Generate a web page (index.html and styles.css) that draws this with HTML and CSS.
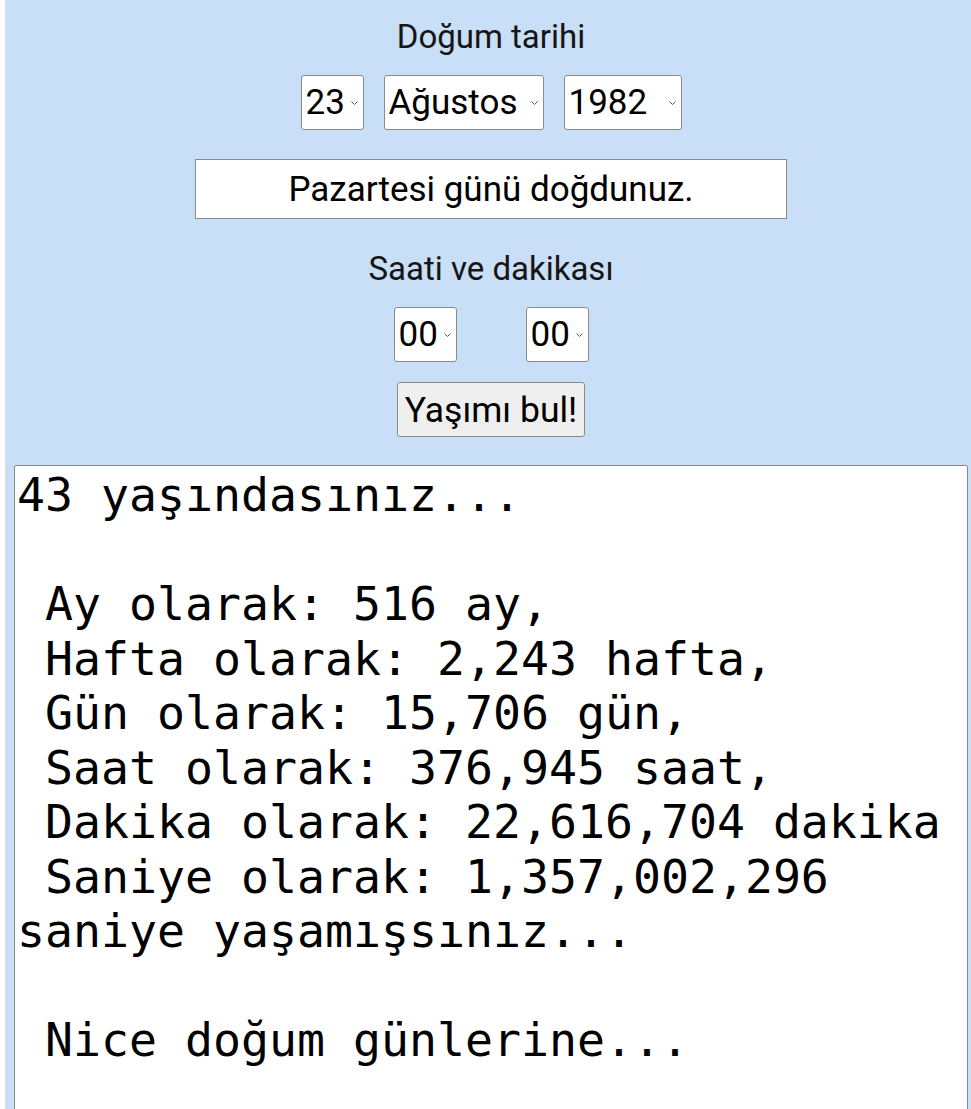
FILE: index.html
```html
<!DOCTYPE html>
<html lang="tr">
<head>
<meta charset="utf-8">
<link rel="stylesheet" href="styles.css">
</head>
<body>
<div class="page">
  <div class="label first">Doğum tarihi</div>
  <div class="row date-row">
    <span class="selwrap"><select class="sel sel-day"><option>23</option></select><svg class="chev" width="7" height="4" viewBox="0 0 7 4"><path d="M0.5 0.5 L3.5 3.5 L6.5 0.5" fill="none" stroke="#555" stroke-width="1"/></svg></span>
    <span class="selwrap"><select class="sel sel-month"><option>Ağustos</option></select><svg class="chev" width="7" height="4" viewBox="0 0 7 4"><path d="M0.5 0.5 L3.5 3.5 L6.5 0.5" fill="none" stroke="#555" stroke-width="1"/></svg></span>
    <span class="selwrap"><select class="sel sel-year"><option>1982</option></select><svg class="chev" width="7" height="4" viewBox="0 0 7 4"><path d="M0.5 0.5 L3.5 3.5 L6.5 0.5" fill="none" stroke="#555" stroke-width="1"/></svg></span>
  </div>
  <input class="result" type="text" readonly value="Pazartesi günü doğdunuz.">
  <div class="label second">Saati ve dakikası</div>
  <div class="row time-row">
    <span class="selwrap"><select class="sel sel-hour"><option>00</option></select><svg class="chev" width="7" height="4" viewBox="0 0 7 4"><path d="M0.5 0.5 L3.5 3.5 L6.5 0.5" fill="none" stroke="#555" stroke-width="1"/></svg></span>
    <span class="selwrap"><select class="sel sel-hour"><option>00</option></select><svg class="chev" width="7" height="4" viewBox="0 0 7 4"><path d="M0.5 0.5 L3.5 3.5 L6.5 0.5" fill="none" stroke="#555" stroke-width="1"/></svg></span>
  </div>
  <div class="row btn-row">
    <button class="btn" type="button">Yaşımı bul!</button>
  </div>
  <textarea class="output" readonly>43 yaşındasınız...

 Ay olarak: 516 ay,
 Hafta olarak: 2,243 hafta,
 Gün olarak: 15,706 gün,
 Saat olarak: 376,945 saat,
 Dakika olarak: 22,616,704 dakika
 Saniye olarak: 1,357,002,296 saniye yaşamışsınız...

 Nice doğum günlerine...</textarea>
</div>
</body>
</html>
```
FILE: styles.css
```css
html, body {
  margin: 0;
  padding: 0;
  background: #ffffff;
}
.page {
  margin-left: 5px;
  padding: 19px 3px 0 9px;
  background: #c9def7;
  display: flex;
  flex-direction: column;
  align-items: center;
  min-height: 1109px;
  box-sizing: border-box;
  font-family: Roboto, "Liberation Sans", sans-serif;
  color: #151515;
}
.label {
  font-size: 33px;
  line-height: 36px;
  height: 36px;
}
.second {
  margin-top: 32px;
}
.row {
  display: flex;
  justify-content: center;
}
.date-row {
  margin-top: 20px;
  gap: 20px;
}
.selwrap {
  position: relative;
  display: block;
  height: 55px;
}
.chev {
  position: absolute;
  top: 26px;
  right: 6px;
  pointer-events: none;
}
.sel {
  display: block;
  -webkit-appearance: none;
  appearance: none;
  height: 55px;
  box-sizing: border-box;
  font-family: Roboto, "Liberation Sans", sans-serif;
  font-size: 35px;
  color: #000;
  background: #fff;
  border: 1px solid #8a8a8a;
  border-radius: 3px;
  padding: 0 0 0 4px;
  margin: 0;
}
.sel-day { width: 63px; }
.sel-month { width: 160px; }
.sel-year { width: 118px; }
.sel-hour { width: 63px; }
.result {
  margin-top: 29px;
  width: 592px;
  height: 60px;
  box-sizing: border-box;
  border: 1px solid #8a8a8a;
  background: #fff;
  font-family: Roboto, "Liberation Sans", sans-serif;
  font-size: 35px;
  color: #000;
  text-align: center;
  padding: 0;
  outline: none;
}
.time-row {
  margin-top: 20px;
  gap: 69px;
}
.btn-row {
  margin-top: 20px;
}
.btn {
  width: 188px;
  height: 55px;
  box-sizing: border-box;
  font-family: Roboto, "Liberation Sans", sans-serif;
  font-size: 35.5px;
  color: #000;
  background: #efefef;
  border: 1px solid #8a8a8a;
  border-radius: 3px;
  padding: 0;
}
.output {
  display: block;
  margin-top: 28px;
  align-self: stretch;
  height: 700px;
  box-sizing: border-box;
  border: 1px solid #8a8a8a;
  border-radius: 2px;
  background: #fff;
  padding: 2px;
  font-family: "DejaVu Sans Mono", monospace;
  font-size: 46.5px;
  line-height: 54.5px;
  color: #000;
  resize: none;
  overflow: hidden;
}
```
